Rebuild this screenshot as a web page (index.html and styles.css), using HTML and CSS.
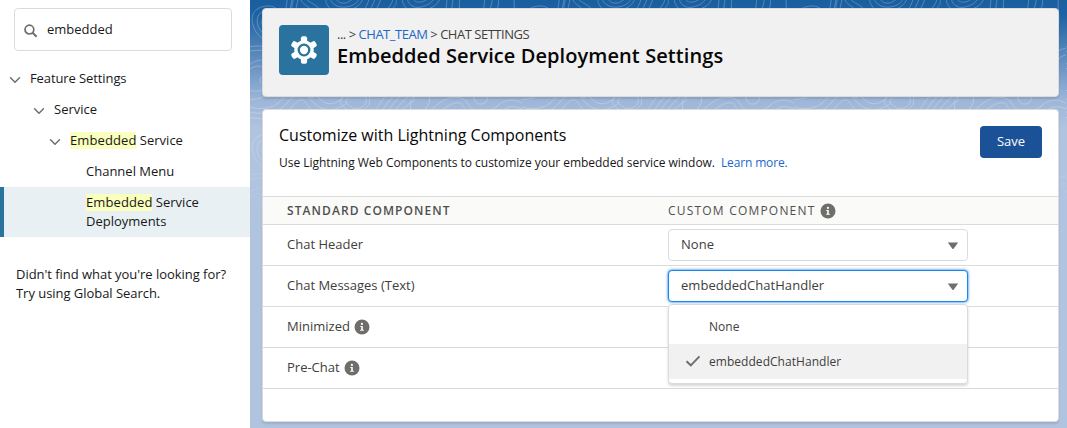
FILE: index.html
```html
<!DOCTYPE html>
<html lang="en">
<head>
<meta charset="utf-8">
<title>Embedded Service Deployment Settings</title>
<link rel="stylesheet" href="styles.css">
</head>
<body>
<svg class="defs" width="0" height="0" aria-hidden="true">
  <symbol id="chev" viewBox="0 0 12 8"><path d="M1.5 1.8 6 6.2l4.5-4.4" fill="none" stroke="#706e6b" stroke-width="1.5" stroke-linecap="round" stroke-linejoin="round"/></symbol>
  <symbol id="info" viewBox="0 0 16 16"><circle cx="8" cy="8" r="7.5" fill="#706e6b"/><circle cx="7.9" cy="4.9" r="1.1" fill="#fff"/><path d="M6.3 7h2.5v3.8h1v1H6.2v-1h1V8h-.9z" fill="#fff"/></symbol>
</svg>
<div class="app">
  <aside class="sidebar">
    <div class="search">
      <svg width="14" height="14" viewBox="0 0 14 14"><circle cx="5.4" cy="5.6" r="4.4" fill="none" stroke="#706e6b" stroke-width="1.7"/><path d="M8.6 8.8 12.6 12.8" stroke="#706e6b" stroke-width="2"/></svg>
      <span class="query">embedded</span>
    </div>
    <nav class="tree">
      <div class="node l1"><svg class="chev"><use href="#chev"/></svg><span>Feature Settings</span></div>
      <div class="node l2"><svg class="chev"><use href="#chev"/></svg><span>Service</span></div>
      <div class="node l3"><svg class="chev"><use href="#chev"/></svg><span><mark>Embedded</mark> Service</span></div>
      <div class="node l4"><span>Channel Menu</span></div>
      <div class="node l4 active"><span><mark>Embedded</mark> Service<br>Deployments</span></div>
    </nav>
    <p class="hint">Didn't find what you're looking for?<br>Try using Global Search.</p>
  </aside>
  <main class="main">
    <svg class="topo" width="817" height="230" aria-hidden="true">
      <defs>
        <pattern id="contours" width="272" height="128" patternUnits="userSpaceOnUse">
          <g fill="none" stroke="#fff" stroke-width="1">
            <path d="M8 26c-3-9 2-16 10-15s9 10 6 18-12 7-16-3zM4 28C-1 16 4 7 17 6s17 12 11 26S9 40 4 28zM12 24c-1-5 1-8 5-8s4 5 2 9-6 4-7-1z"/>
            <path d="M-4 48c12-5 25 2 34-5s7-25 13-47M-4 52c15-4 28 1 38-7s9-28 15-49M38-4c-5 26-4 39 11 45s31-8 26-23S57 4 54-4M44-4c-5 22-4 34 7 39s22-5 18-16S51 6 49-4"/>
            <path d="M79-4c2 8 8 12 17 11s13-6 14-11M85-4c1 5 5 8 10 7s8-4 9-7M75-4c1 13 9 18 21 15s16-8 18-15"/>
            <path d="M120-4c-4 18-18 25-26 43s5 34 21 25 10-33 22-48 9-11 9-20M126-4c-5 18-17 26-24 42s4 25 14 18 7-30 19-44 6-12 6-16M132-4c-5 15-11 22-16 31"/>
            <path d="M152-4c0 12 8 18 20 15s18-8 18-15M157-4c0 8 6 13 14 11s13-6 14-11M163-4c0 5 3 7 8 6s7-3 8-6"/>
            <path d="M198-4c-5 18 1 31 15 36s27-2 32-16 3-14 4-20M204-4c-5 16 0 26 11 30s20-3 24-14 3-12 3-16M211-4c-4 11-1 19 7 22s15-4 16-12 1-8 1-10"/>
            <path d="M276 48c-12 0-20 7-23 17s-13 15-24 12-11-17 0-24 26-6 32-18 3-18 3-39M276 54c-10 1-15 7-18 16s-18 20-33 15-17-24-3-33 27-4 32-16"/>
            <path d="M-4 72c10-9 19-7 23 1s-3 17-10 18-13-2-13-2M-4 67c14-12 27-7 30 4s-6 24-16 27-14 0-14 0M10 80c0-6 8-6 8 0s-8 6-8 0z"/>
            <path d="M-4 106c16 5 29 3 38-9s24-12 32-2 16 12 27 3M-4 111c18 5 33 2 42-9s17-10 24-1 22 13 36 1M-4 117c21 4 37 1 46-10s11-8 17 0 24 15 42 2M38 96c8-4 17-2 25 2"/>
            <path d="M92 98c8-10 23-12 27-2s-8 18-17 15-14-7-10-13zM96 100c6-7 17-9 20-2s-8 13-13 10-9-5-7-8zM122 124c3-16 10-28 24-35M127 125c3-13 10-24 22-34M132 125c3-11 10-22 21-31M137 125c4-12 12-20 22-29M142 125c4-10 11-18 23-25"/>
            <path d="M163 98c10-7 19-4 16 5s-16 14-18 6 1-10 2-11zM156 117c15 5 22-5 32-13s25-10 30 0 19 10 29 2 19-8 29 0M160 123c19 2 26-9 35-15s16-8 20 1 22 14 34 4 18-6 27-2M224 97c8-5 15-3 13 3s-13 6-13-3z"/>
          </g>
        </pattern>
        <linearGradient id="fade" x2="0" y2="1"><stop offset=".5" stop-color="#fff"/><stop offset="1" stop-color="#000"/></linearGradient>
        <mask id="fadeMask"><rect width="817" height="230" fill="url(#fade)"/></mask>
      </defs>
      <rect width="817" height="230" fill="url(#contours)" mask="url(#fadeMask)" opacity=".25"/>
    </svg>
    <header class="page-head">
      <div class="gear">
        <svg width="30" height="30" viewBox="-15 -15 30 30">
          <circle r="9.8" fill="#fff"/>
          <g fill="#fff"><rect id="tooth" x="-3.1" y="-13.8" width="6.2" height="27.6" rx="2"/><rect x="-3.1" y="-13.8" width="6.2" height="27.6" rx="2" transform="rotate(60)"/><rect x="-3.1" y="-13.8" width="6.2" height="27.6" rx="2" transform="rotate(120)"/></g>
          <circle r="5.3" fill="none" stroke="#2a739e" stroke-width="2.3"/>
        </svg>
      </div>
      <div>
        <div class="crumbs"><span>...</span> &gt; <a>CHAT_TEAM</a> &gt; CHAT SETTINGS</div>
        <h1>Embedded Service Deployment Settings</h1>
      </div>
    </header>
    <section class="card">
      <div class="card-head">
        <div>
          <h2>Customize with Lightning Components</h2>
          <p class="lead"><span>Use Lightning Web Components to customize your embedded service window.</span><a>Learn more.</a></p>
        </div>
        <button class="save">Save</button>
      </div>
      <div class="row thead"><div class="std">STANDARD COMPONENT</div><div class="cus">CUSTOM COMPONENT<svg class="info"><use href="#info"/></svg></div></div>
      <div class="row"><div class="name">Chat Header</div><div class="select"><span>None</span><svg class="arrow" width="12" height="8" viewBox="0 0 12 8"><path d="M.8.6h10.4L6.6 6.7q-.6.7-1.2 0z" fill="#706e6b"/></svg></div></div>
      <div class="row"><div class="name">Chat Messages (Text)</div>
        <div class="select focus"><span>embeddedChatHandler</span><svg class="arrow" width="12" height="8" viewBox="0 0 12 8"><path d="M.8.6h10.4L6.6 6.7q-.6.7-1.2 0z" fill="#706e6b"/></svg>
          <div class="menu">
            <div class="option">None</div>
            <div class="option chosen"><svg class="check" width="16" height="12" viewBox="0 0 16 12"><path d="M1.5 6.2 5.8 10.3 14.5 1.3" fill="none" stroke="#706e6b" stroke-width="1.9"/></svg>embeddedChatHandler</div>
          </div>
        </div>
      </div>
      <div class="row"><div class="name">Minimized<svg class="info"><use href="#info"/></svg></div></div>
      <div class="row"><div class="name">Pre-Chat<svg class="info"><use href="#info"/></svg></div></div>
    </section>
  </main>
</div>
</body>
</html>
```
FILE: styles.css
```css
* { box-sizing: border-box; }
body { margin: 0; font: 13px/19px "Open Sans", "Noto Sans", sans-serif; color: #181818; background: #fff; }
h1, h2, p { margin: 0; font-weight: 400; }
a { color: #1a68cc; }
svg { flex: none; }
.defs { position: absolute; }
.app { display: flex; width: 1067px; height: 428px; overflow: hidden; }

.sidebar { width: 250px; flex: none; padding-top: 8px; }
.search { display: flex; align-items: center; width: 218px; height: 43px; margin-left: 14px; padding: 2px 0 0 9px; border: 1px solid #dddbda; border-radius: 4px; }
.query { margin: -3px 0 0 9px; }
.tree { margin-top: 12px; }
.node { display: flex; align-items: flex-start; height: 31px; padding-top: 6px; }
.chev { width: 12px; height: 8px; margin: 7px 9px 0 0; }
.l1 { padding-left: 9px; letter-spacing: -.1px; }
.l2 { padding-left: 33px; }
.l3 { padding-left: 49px; }
.l4 { padding-left: 86px; }
.active { height: 50px; padding-left: 82px; border-left: 4px solid #2a739e; background: #e8f0f3; }
mark { display: inline-block; height: 17px; line-height: 17px; background: #faffbd; color: inherit; letter-spacing: .1px; }
.hint { margin: 28px 0 0 16px; letter-spacing: -.04px; }

.main { position: relative; flex: 1; padding: 8px 8px 0 12px; background: linear-gradient(#195e9f 0, #1f63a3 16px, #9db5d8 100px, #b0c4df 128px); }
.topo { position: absolute; left: 0; top: 0; }
.page-head { position: relative; display: flex; height: 89px; padding: 16px 16px 0; background: #f2f1f1; border: 1px solid #dddbda; border-radius: 4px; box-shadow: 0 2px 2px rgba(0,0,0,.1); }
.gear { display: flex; align-items: center; justify-content: center; width: 50px; height: 50px; margin-right: 8px; border-radius: 4px; background: #2a739e; }
.crumbs { color: #3e3e3c; line-height: 19px; letter-spacing: -.48px; }
h1 { font-size: 20px; line-height: 24px; font-weight: 600; color: #080707; letter-spacing: .08px; }
.card { position: relative; height: 313px; margin-top: 12px; background: #fff; border: 1px solid #dddbda; border-radius: 4px; box-shadow: 0 2px 2px rgba(0,0,0,.1); }
.card-head { display: flex; justify-content: space-between; height: 86px; padding: 16px; }
h2 { margin-top: -1px; font-size: 16px; line-height: 20px; color: #080707; }
.lead { display: flex; gap: 6px; margin-top: 8px; font-size: 12px; line-height: 19px; letter-spacing: -.03px; }
.lead a { letter-spacing: -.15px; }
.save { width: 62px; height: 32px; padding: 0 0 2px; border: 0; border-radius: 4px; background: #1b5297; color: #fff; font: 13px "Open Sans", sans-serif; }
.row { display: flex; align-items: center; height: 41px; padding-left: 24px; border-bottom: 1px solid #dddbda; color: #3e3e3c; }
.thead { height: 29px; border-top: 1px solid #dddbda; background: #fafaf9; font-size: 12px; color: #514f4d; }
.std, .name { display: flex; align-items: center; width: 381px; }
.name { padding-bottom: 2px; }
.std { font-weight: 600; letter-spacing: 1.08px; }
.cus { display: flex; align-items: center; letter-spacing: 1.2px; }
.info { width: 16px; height: 16px; margin: 1px 0 0 4px; }
.select { position: relative; display: flex; align-items: center; justify-content: space-between; width: 300px; height: 32px; padding: 0 8px 0 12px; border: 1px solid #dddbda; border-radius: 4px; background: #fff; }
.select > span { margin-top: -1px; letter-spacing: .04px; }
.focus { border-color: #1589ee; box-shadow: 0 0 3px #0070d2; }
.arrow { margin-top: 2px; }
.menu { position: absolute; z-index: 2; left: -1px; top: 33px; width: 300px; height: 80px; padding-top: 4px; border: 1px solid #dddbda; border-radius: 4px; background: #fff; box-shadow: 0 2px 3px rgba(0,0,0,.16); font-size: 12px; letter-spacing: .04px; }
.option { position: relative; height: 35px; padding-left: 40px; line-height: 35px; }
.chosen { background: #f1f1f1; }
.check { position: absolute; left: 16px; top: 11px; }
```
